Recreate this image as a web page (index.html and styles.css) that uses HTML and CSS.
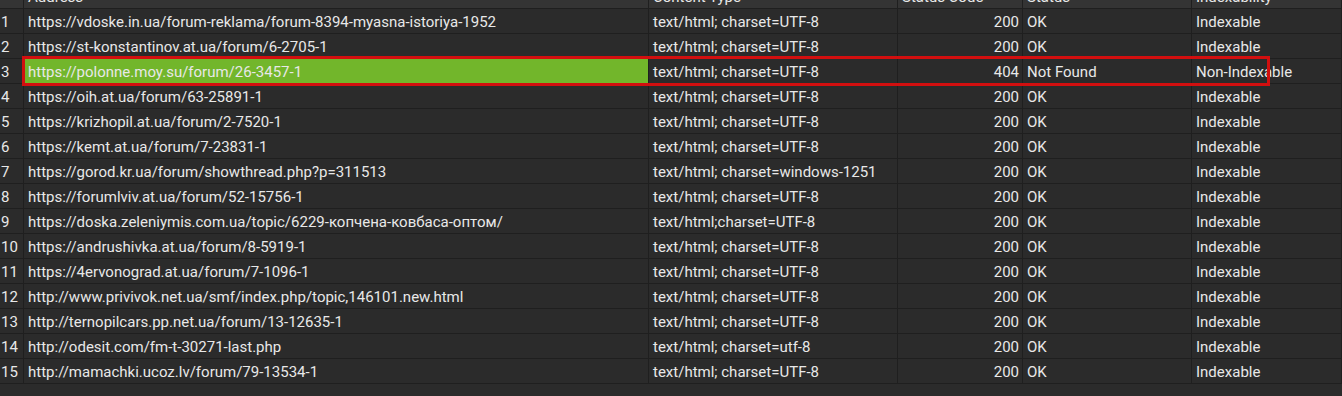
FILE: index.html
```html
<!DOCTYPE html>
<html>
<head>
<meta charset="utf-8">
<link rel="stylesheet" href="styles.css">
</head>
<body>
<div class="wrap">
  <div class="grid">
    <div class="hd num"></div><div class="hd">Address</div><div class="hd">Content Type</div><div class="hd">Status Code</div><div class="hd">Status</div><div class="hd">Indexability</div>

    <div class="c num">1</div><div class="c">https://vdoske.in.ua/forum-reklama/forum-8394-myasna-istoriya-1952</div><div class="c">text/html; charset=UTF-8</div><div class="c r">200</div><div class="c">OK</div><div class="c">Indexable</div>
    <div class="c num">2</div><div class="c">https://st-konstantinov.at.ua/forum/6-2705-1</div><div class="c">text/html; charset=UTF-8</div><div class="c r">200</div><div class="c">OK</div><div class="c">Indexable</div>
    <div class="c num">3</div><div class="c sel">https://polonne.moy.su/forum/26-3457-1</div><div class="c">text/html; charset=UTF-8</div><div class="c r">404</div><div class="c">Not Found</div><div class="c">Non-Indexable</div>
    <div class="c num">4</div><div class="c">https://oih.at.ua/forum/63-25891-1</div><div class="c">text/html; charset=UTF-8</div><div class="c r">200</div><div class="c">OK</div><div class="c">Indexable</div>
    <div class="c num">5</div><div class="c">https://krizhopil.at.ua/forum/2-7520-1</div><div class="c">text/html; charset=UTF-8</div><div class="c r">200</div><div class="c">OK</div><div class="c">Indexable</div>
    <div class="c num">6</div><div class="c">https://kemt.at.ua/forum/7-23831-1</div><div class="c">text/html; charset=UTF-8</div><div class="c r">200</div><div class="c">OK</div><div class="c">Indexable</div>
    <div class="c num">7</div><div class="c">https://gorod.kr.ua/forum/showthread.php?p=311513</div><div class="c">text/html; charset=windows-1251</div><div class="c r">200</div><div class="c">OK</div><div class="c">Indexable</div>
    <div class="c num">8</div><div class="c">https://forumlviv.at.ua/forum/52-15756-1</div><div class="c">text/html; charset=UTF-8</div><div class="c r">200</div><div class="c">OK</div><div class="c">Indexable</div>
    <div class="c num">9</div><div class="c">https://doska.zeleniymis.com.ua/topic/6229-копчена-ковбаса-оптом/</div><div class="c">text/html;charset=UTF-8</div><div class="c r">200</div><div class="c">OK</div><div class="c">Indexable</div>
    <div class="c num">10</div><div class="c">https://andrushivka.at.ua/forum/8-5919-1</div><div class="c">text/html; charset=UTF-8</div><div class="c r">200</div><div class="c">OK</div><div class="c">Indexable</div>
    <div class="c num">11</div><div class="c">https://4ervonograd.at.ua/forum/7-1096-1</div><div class="c">text/html; charset=UTF-8</div><div class="c r">200</div><div class="c">OK</div><div class="c">Indexable</div>
    <div class="c num">12</div><div class="c">http://www.privivok.net.ua/smf/index.php/topic,146101.new.html</div><div class="c">text/html; charset=UTF-8</div><div class="c r">200</div><div class="c">OK</div><div class="c">Indexable</div>
    <div class="c num">13</div><div class="c">http://ternopilcars.pp.net.ua/forum/13-12635-1</div><div class="c">text/html; charset=UTF-8</div><div class="c r">200</div><div class="c">OK</div><div class="c">Indexable</div>
    <div class="c num">14</div><div class="c">http://odesit.com/fm-t-30271-last.php</div><div class="c">text/html; charset=utf-8</div><div class="c r">200</div><div class="c">OK</div><div class="c">Indexable</div>
    <div class="c num">15</div><div class="c">http://mamachki.ucoz.lv/forum/79-13534-1</div><div class="c">text/html; charset=UTF-8</div><div class="c r">200</div><div class="c">OK</div><div class="c">Indexable</div>
  </div>
  <div class="mark"></div>
</div>
</body>
</html>
```

FILE: styles.css
```css
html, body {
  margin: 0;
  padding: 0;
  background: #2b2b2b;
  height: 100%;
  overflow: hidden;
}
body {
  font-family: Roboto, "Liberation Sans", Arial, sans-serif;
  font-size: 15px;
  color: #e8e8e8;
}
.wrap {
  position: relative;
  margin-top: -16px;
}
.grid {
  display: grid;
  grid-template-columns: 24px 625px 249px 125px 169px 1fr;
  grid-auto-rows: 25px;
}
.hd, .c {
  box-sizing: border-box;
  border-right: 1px solid #1f1f1f;
  border-bottom: 1px solid #1f1f1f;
  padding: 1px 4px 0 4px;
  display: flex;
  align-items: center;
  white-space: nowrap;
  overflow: hidden;
  line-height: 24px;
}
.hd {
  background: #343434;
}
.c {
  background: #2b2b2b;
}
.num {
  padding-left: 1px;
  padding-right: 0;
}
.r {
  justify-content: flex-end;
  padding-right: 3px;
}
.sel {
  background: #72b62b;
}
.mark {
  position: absolute;
  left: 22px;
  top: 72px;
  width: 1248px;
  height: 30px;
  box-sizing: border-box;
  border: 3px solid #d20f0f;
  pointer-events: none;
}
```
